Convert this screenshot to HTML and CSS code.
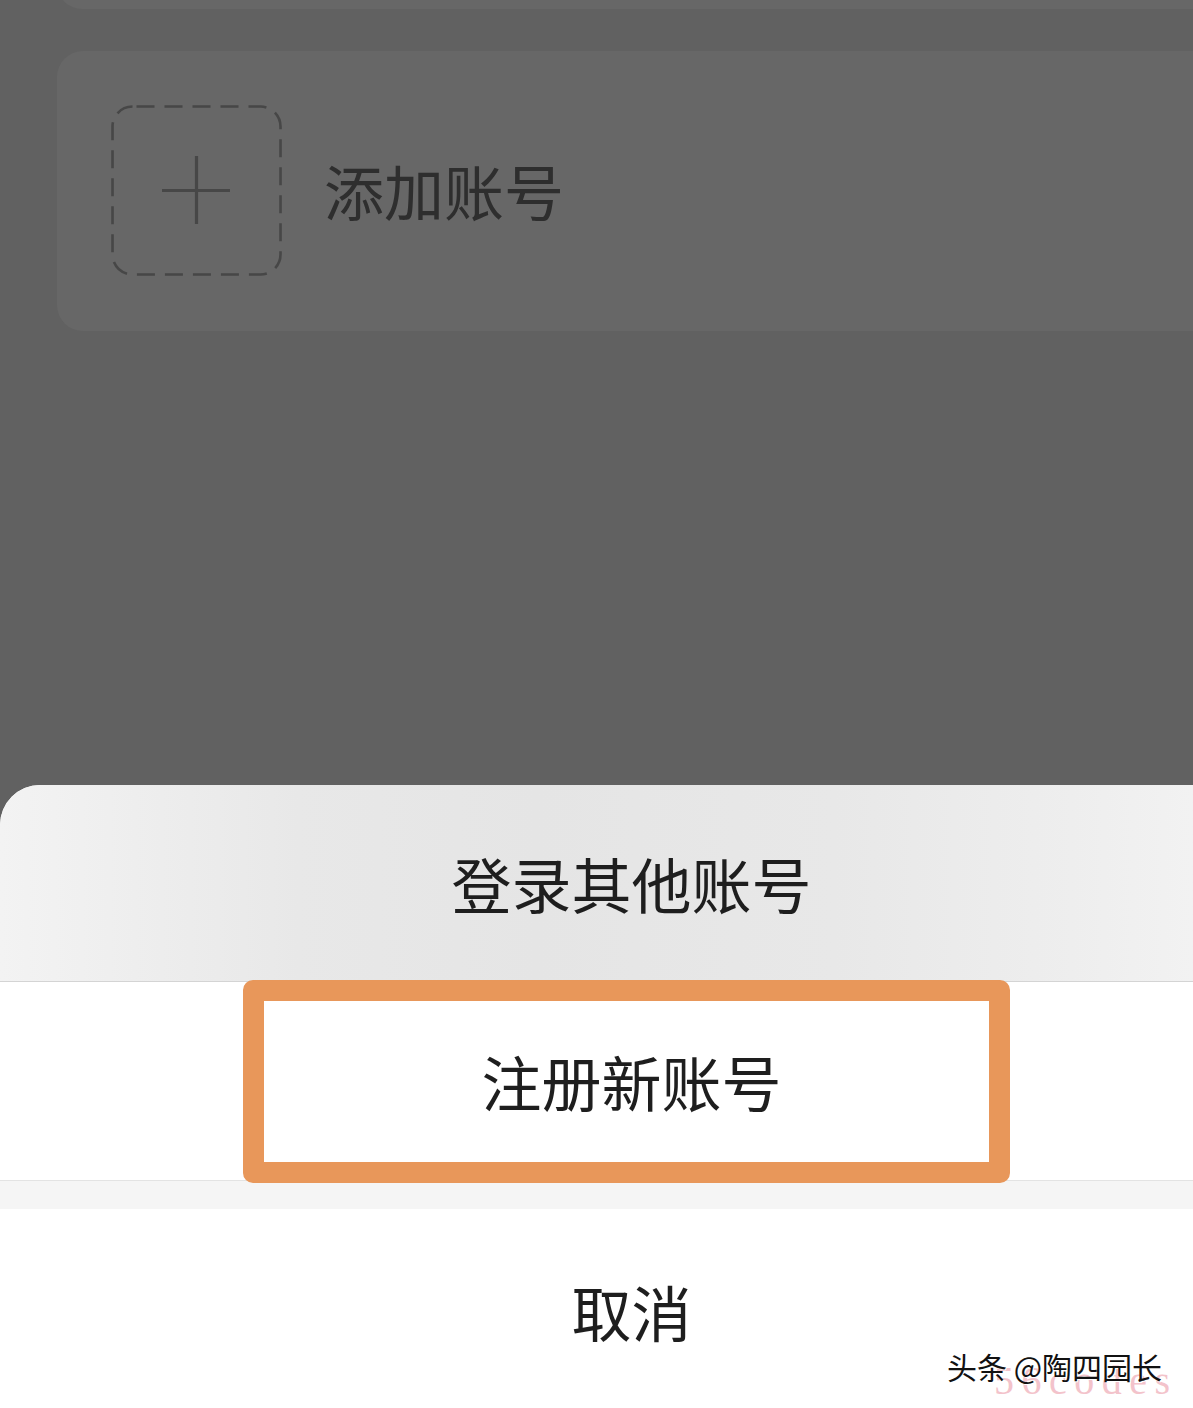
FILE: index.html
```html
<!DOCTYPE html>
<html lang="zh-CN">
<head>
<meta charset="utf-8">
<title>账号</title>
<link rel="stylesheet" href="styles.css">
</head>
<body>
<div class="screen">
  <div class="card card-top"></div>
  <div class="card card-add">
    <svg class="add-icon" width="172" height="172" viewBox="0 0 172 172">
      <rect x="1.5" y="1.5" width="168" height="168" rx="20" ry="20" fill="none" stroke="#474747" stroke-width="2.6" stroke-dasharray="18 10" stroke-dashoffset="-4"/>
      <path d="M51 85.5H119M85.5 51V119" stroke="#474747" stroke-width="3.2" fill="none"/>
    </svg>
    <span class="add-label">添加账号</span>
  </div>
  <div class="spacer"></div>
  <div class="sheet">
    <div class="sheet-row row-other">登录其他账号</div>
    <div class="sheet-row row-register">
      <span class="highlight"></span>
      <span class="row-text">注册新账号</span>
    </div>
    <div class="sheet-gap"></div>
    <div class="sheet-row row-cancel">取消</div>
    <div class="watermark">
      <span class="wm-site">56codes</span>
      <span class="wm-text">头条 @陶四园长</span>
    </div>
  </div>
</div>
</body>
</html>
```

FILE: styles.css
```css
* { box-sizing: border-box; }

html, body {
  margin: 0;
  padding: 0;
}

body {
  width: 1193px;
  height: 1408px;
  overflow: hidden;
  background: #616161;
  font-family: "Noto Sans CJK SC", "Noto Sans", sans-serif;
}

.screen {
  width: 1193px;
  height: 1408px;
  display: flex;
  flex-direction: column;
  overflow: hidden;
}

.card {
  background: #676767;
  border-radius: 26px;
  margin: 0 -40px 0 57px;
  flex: none;
}

.card-top {
  height: 50px;
  margin-top: -41px;
}

.card-add {
  margin-top: 42px;
  height: 280px;
  display: flex;
  align-items: center;
  padding-left: 54px;
  gap: 41px;
}

.add-icon {
  display: block;
  flex: none;
}

.add-label {
  font-size: 60px;
  line-height: 60px;
  color: #2e2e2e;
  padding-bottom: 2px;
}

.spacer {
  flex: 1;
}

.sheet {
  position: relative;
  flex: none;
  border-radius: 40px 0 0 0;
  overflow: hidden;
  background: #ffffff;
}

.sheet-row {
  position: relative;
  display: flex;
  align-items: center;
  justify-content: center;
  padding-left: 70px;
  font-size: 60px;
  line-height: 60px;
  color: #1e1e1e;
}

.row-other {
  height: 197px;
  border-bottom: 1px solid #d4d4d4;
  background: linear-gradient(to right, #f3f3f3 0%, #e8e8e8 25%, #e5e5e5 45%, #e8e8e8 70%, #eeeeee 90%, #f2f2f2 100%);
}

.row-register {
  height: 199px;
  border-bottom: 1px solid #e3e3e3;
  background: #ffffff;
}

.row-text {
  position: relative;
}

.highlight {
  position: absolute;
  left: 243px;
  top: -2px;
  width: 767px;
  height: 203px;
  border: 21px solid #e8975a;
  border-radius: 10px;
}

.sheet-gap {
  height: 28px;
  background: #f5f5f5;
}

.row-cancel {
  height: 199px;
  background: #ffffff;
  padding-top: 4px;
}

.watermark {
  position: absolute;
  left: 947px;
  top: 566px;
  width: 240px;
  height: 50px;
}

.wm-text {
  position: relative;
  font-size: 30px;
  line-height: 30px;
  color: #111111;
  text-shadow: 1px 1px 0 #ffffff;
  white-space: nowrap;
}

.wm-site {
  position: absolute;
  left: 47px;
  top: 10px;
  font-family: "Liberation Serif", serif;
  font-size: 40px;
  line-height: 40px;
  letter-spacing: 7.5px;
  color: #f2b9c2;
  opacity: 0.85;
  white-space: nowrap;
}
```
